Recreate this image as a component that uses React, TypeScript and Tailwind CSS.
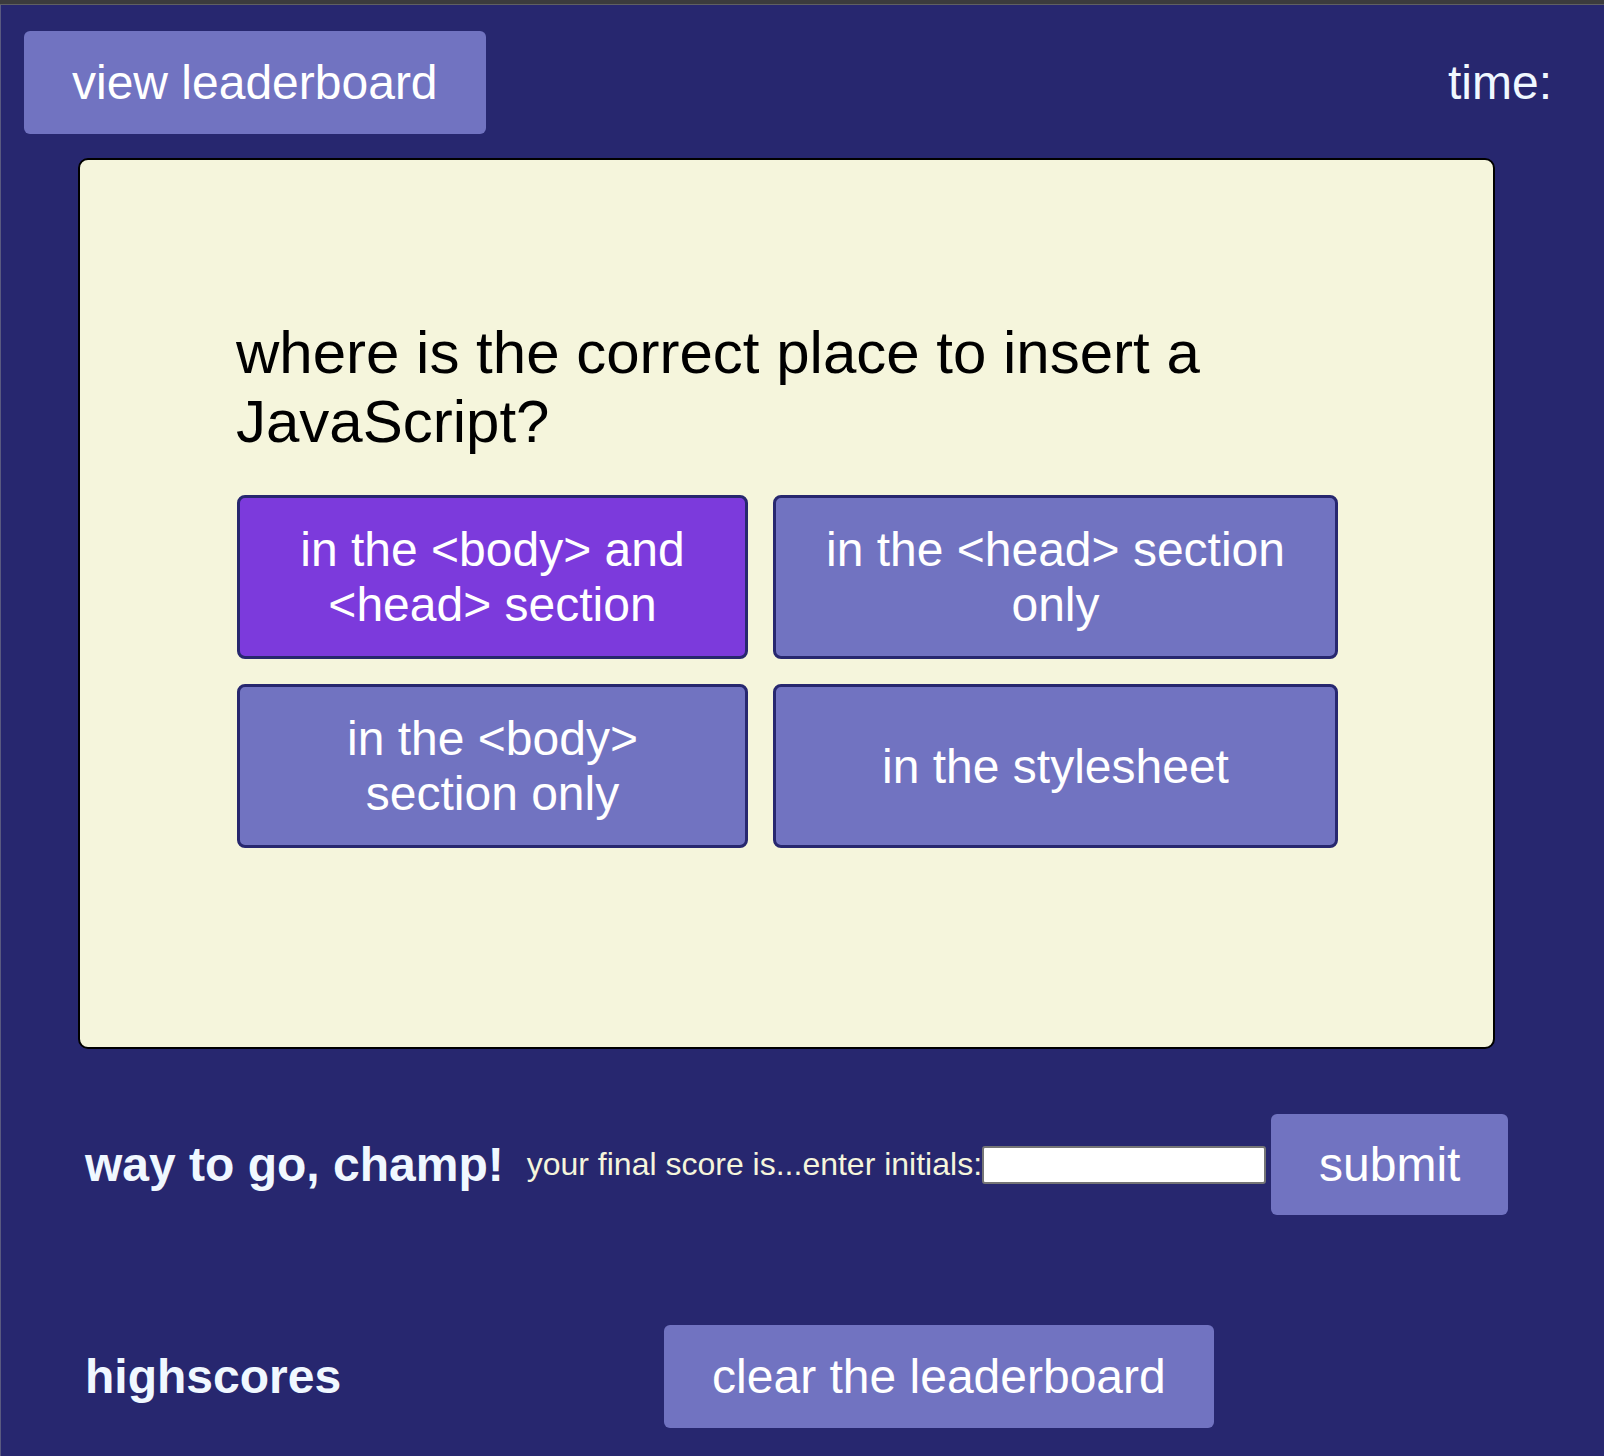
import React from "react";

export default function App() {
  const answers = [
    { text: "in the <body> and <head> section", active: true },
    { text: "in the <head> section only", active: false },
    { text: "in the <body> section only", active: false },
    { text: "in the stylesheet", active: false },
  ];
  return (
    <div className="w-full min-h-[1456px] bg-[#27276f] font-['Liberation_Sans',Arial,sans-serif] flex flex-col">
      <div className="h-[4px] bg-[#3b3b3d]" />
      <div className="h-[1px] bg-[#5f5f62]" />
      <div className="flex-1 border-l-[1px] border-[#5a5a80] flex flex-col">
        <header className="flex items-center justify-between pl-[23px] pr-[52px] pt-[26px]">
          <button className="bg-[#7173c1] text-white text-[48px] leading-[55px] px-[48px] py-[24px] rounded-[6px]">
            view leaderboard
          </button>
          <span className="text-[#f0f8ff] text-[48px] leading-[55px]">time:</span>
        </header>

        <main className="ml-[77px] mt-[24px] w-[1417px] h-[891px] bg-[#f5f5dc] border-2 border-black rounded-[10px] pl-[156px] pr-[156px] pt-[158px]">
          <h2 className="text-black text-[60px] leading-[69px]">
            where is the correct place to insert a JavaScript?
          </h2>
          <div className="mt-[39px] ml-[1px] grid grid-cols-[511px_565px] gap-[25px]">
            {answers.map((a) => (
              <button
                key={a.text}
                className={
                  "h-[164px] border-[3px] border-[#27276f] rounded-[8px] text-white text-[48px] leading-[55px] px-[48px] py-[24px] flex items-center justify-center text-center " +
                  (a.active ? "bg-[#7c3adc]" : "bg-[#7173c1]")
                }
              >
                {a.text}
              </button>
            ))}
          </div>
        </main>

        <section className="mt-[65px] pl-[84px] flex items-center">
          <h2 className="text-[#f0f8ff] text-[48px] leading-[55px] font-bold">way to go, champ!</h2>
          <label className="ml-[23px] text-[#f5f5dc] text-[32px] leading-[37px]">
            your final score is...enter initials:
          </label>
          <input
            type="text"
            className="w-[284px] h-[38px] bg-white border-2 border-[#767676] rounded-[3px]"
          />
          <button className="ml-[5px] bg-[#7173c1] text-white text-[48px] leading-[55px] px-[48px] py-[23px] rounded-[6px]">
            submit
          </button>
        </section>

        <section className="mt-[110px] pl-[84px] flex items-center">
          <h2 className="text-[#f0f8ff] text-[48px] leading-[55px] font-bold">highscores</h2>
          <button className="ml-[323px] bg-[#7173c1] text-white text-[48px] leading-[55px] px-[48px] py-[24px] rounded-[6px]">
            clear the leaderboard
          </button>
        </section>
      </div>
    </div>
  );
}
